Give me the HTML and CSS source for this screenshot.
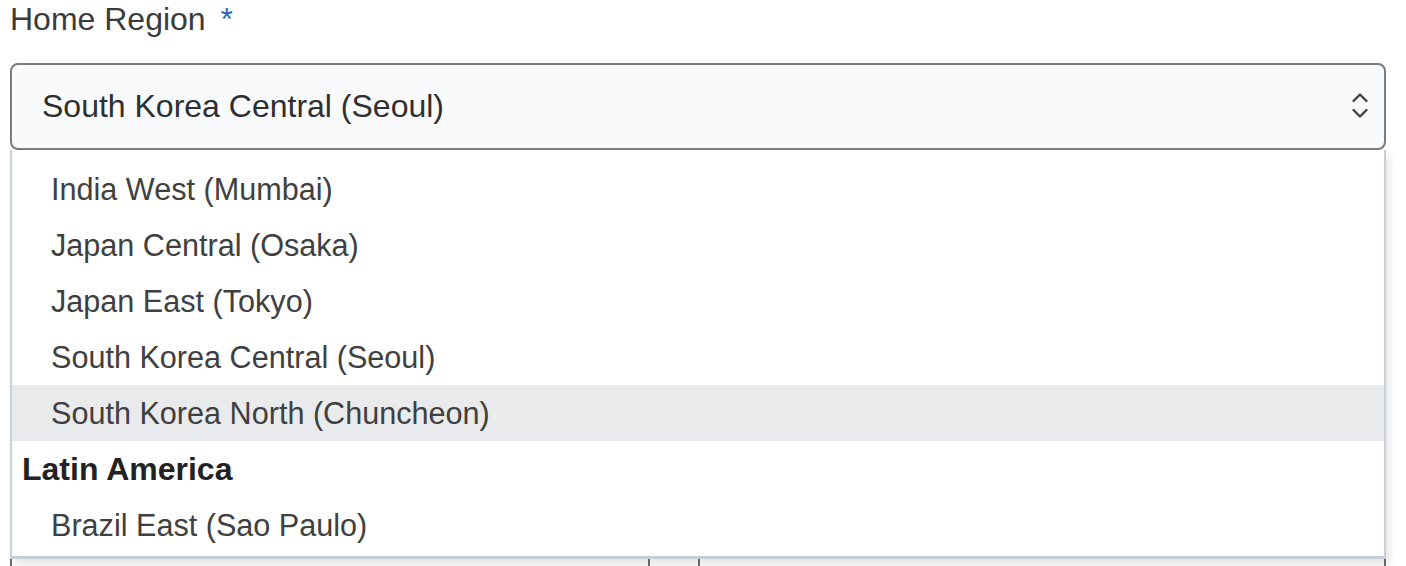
FILE: index.html
```html
<!DOCTYPE html>
<html lang="en">
<head>
<meta charset="utf-8">
<title>Home Region</title>
<link rel="stylesheet" href="styles.css">
</head>
<body>
<div class="field">
  <div class="label">Home Region <span class="req">*</span></div>
  <div class="select-wrap">
    <div class="select">
      <span class="value">South Korea Central (Seoul)</span>
      <svg class="chev" width="20" height="30" viewBox="0 0 20 30" aria-hidden="true">
        <polyline points="3.5,9 10,2.5 16.5,9" fill="none" stroke="#3d3d3d" stroke-width="2.3" stroke-linecap="round" stroke-linejoin="round"/>
        <polyline points="3.5,18 10,24.5 16.5,18" fill="none" stroke="#3d3d3d" stroke-width="2.3" stroke-linecap="round" stroke-linejoin="round"/>
      </svg>
    </div>
    <ul class="menu">
      <li class="opt">India West (Mumbai)</li>
      <li class="opt">Japan Central (Osaka)</li>
      <li class="opt">Japan East (Tokyo)</li>
      <li class="opt">South Korea Central (Seoul)</li>
      <li class="opt hover">South Korea North (Chuncheon)</li>
      <li class="group">Latin America</li>
      <li class="opt">Brazil East (Sao Paulo)</li>
    </ul>
  </div>
  <div class="below">
    <div class="cell wide"></div>
    <div class="cell narrow"></div>
    <div class="cell rest"></div>
  </div>
</div>
</body>
</html>
```
FILE: styles.css
```css
html, body {
  margin: 0;
  padding: 0;
  background: #ffffff;
}
body {
  font-family: "Liberation Sans", Arial, sans-serif;
  color: #333333;
  overflow: hidden;
  height: 566px;
}
.field {
  padding: 0 20px 0 10px;
  width: 1376px;
}
.label {
  font-size: 32px;
  line-height: 38px;
  color: #3b3b3b;
  height: 38px;
}
.req {
  color: #2f62b4;
  margin-left: 6px;
}
.select-wrap {
  position: relative;
  margin-top: 25px;
}
.select {
  box-sizing: border-box;
  height: 87px;
  border: 2px solid #7c7c7c;
  border-radius: 8px;
  background: #f9fafb;
  display: flex;
  align-items: center;
  justify-content: space-between;
  padding: 0 14px 0 30px;
}
.value {
  font-size: 32px;
  color: #2f2f2f;
  margin-top: -1px;
}
.chev {
  display: block;
  margin-top: 1px;
}
.menu {
  position: absolute;
  top: 87px;
  left: 0;
  width: 1376px;
  box-sizing: border-box;
  margin: 0;
  padding: 11px 0 3px 0;
  list-style: none;
  background: #ffffff;
  border-left: 2px solid #c9d0d7;
  border-right: 2px solid #c9d0d7;
  border-bottom: 3px solid #c6cdd4;
  box-shadow: 4px 6px 8px rgba(0, 0, 0, 0.10);
  z-index: 2;
}
.opt, .group {
  height: 56px;
  line-height: 56px;
  white-space: nowrap;
}
.opt {
  font-size: 30.6px;
  color: #404040;
  padding-left: 39px;
}
.opt.hover {
  background: #e9eaec;
}
.group {
  font-size: 32px;
  font-weight: bold;
  color: #222222;
  padding-left: 10px;
}
.below {
  display: flex;
  height: 116px;
  margin-top: 300px;
  border-left: 2px solid #6d6d6d;
  border-right: 2px solid #6d6d6d;
  box-sizing: border-box;
}
.cell {
  height: 100%;
}
.wide {
  width: 636px;
  border-right: 2px solid #6d6d6d;
}
.narrow {
  width: 48px;
  border-right: 2px solid #6d6d6d;
}
.rest {
  flex: 1;
}
```
